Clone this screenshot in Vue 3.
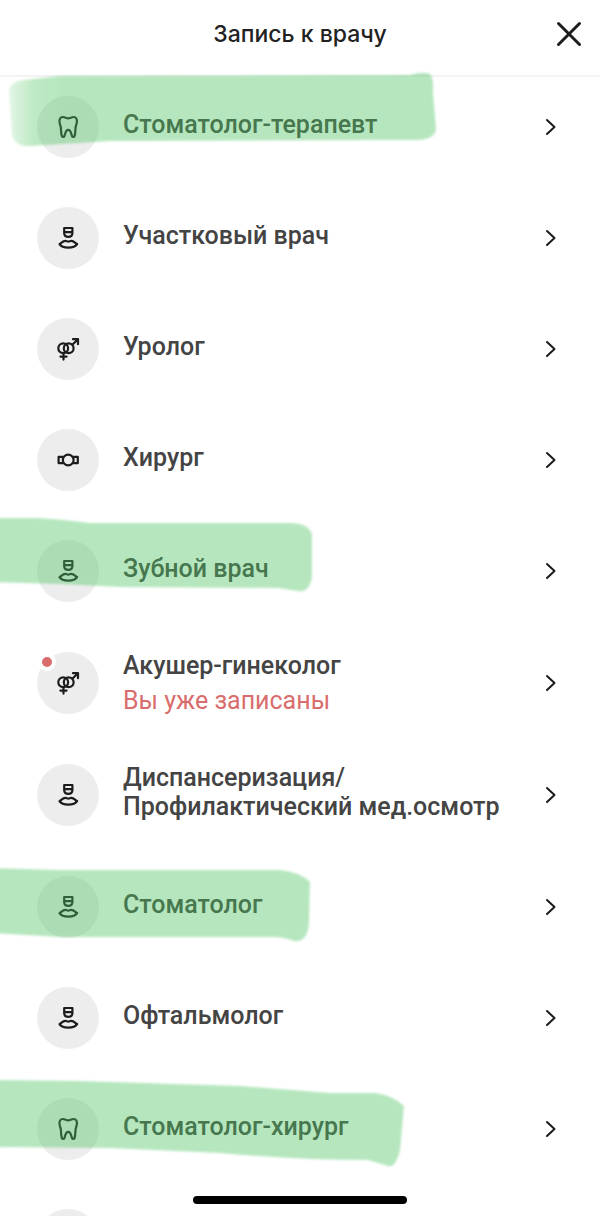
<script setup>
import { ref } from "vue";

const doctors = ref([
  {
    id: 1,
    title: "Стоматолог-терапевт",
    icon: "tooth",
    marker:
      "M9 18 Q11 9 24 8 L60 4 L410 3 Q424 -1 430 2 Q434 8 433 20 L436 58 Q434 67 418 68 L110 69 L30 74 Q14 75 12 62 Z",
    fade: true,
  },
  { id: 2, title: "Участковый врач", icon: "doctor" },
  { id: 3, title: "Уролог", icon: "gender" },
  { id: 4, title: "Хирург", icon: "surgeon" },
  {
    id: 5,
    title: "Зубной врач",
    icon: "doctor",
    marker:
      "M-8 2 L36 2 Q60 3 90 7 L290 7 Q308 7 312 18 L312 60 Q310 77 298 75 L278 72 L120 71 L60 68 L-8 66 Z",
  },
  {
    id: 6,
    title: "Акушер-гинеколог",
    icon: "gender",
    note: "Вы уже записаны",
  },
  {
    id: 7,
    title: "Диспансеризация/\nПрофилактический мед.осмотр",
    icon: "doctor",
  },
  {
    id: 8,
    title: "Стоматолог",
    icon: "doctor",
    marker:
      "M-8 16 L60 18 L280 18 Q300 20 310 30 L309 70 Q308 91 294 89 Q284 85 272 85 L60 85 L-8 81 Z",
  },
  {
    id: 9,
    title: "Офтальмолог",
    icon: "doctor",
  },
  {
    id: 10,
    title: "Стоматолог-хирург",
    icon: "tooth",
    marker:
      "M-8 6 L80 7 L240 12 L330 19 L375 19 Q392 21 404 32 L400 76 Q396 94 388 92 L368 86 Q300 86 220 79 L110 74 L-8 73 Z",
  },
  { id: 11, title: "", icon: "" },
]);
</script>

<template>
  <main class="screen">
    <header class="header">
      <h1>Запись к врачу</h1>
      <button class="close" type="button" aria-label="Закрыть">
        <svg width="26" height="26" viewBox="0 0 26 26">
          <path d="M2.5 2.5 23.5 23.5M23.5 2.5 2.5 23.5" />
        </svg>
      </button>
    </header>

    <ul class="list">
      <li v-for="doctor in doctors" :key="doctor.id">
        <button
          type="button"
          class="doctor"
          :class="{ noted: doctor.note, tall: doctor.id === 7 }"
        >
          <span class="avatar">
            <svg
              v-if="doctor.icon === 'tooth'"
              class="icon"
              width="24"
              height="24"
              viewBox="0 0 24 24"
            >
              <path
                d="M12.2 3.4C10.200 3.200 8.800 2 6.800 2 4.200 2 3.200 4.200 3.500 7c.2 2.200 1.200 3.600 1.400 6 .2 2.800.1 5.600.9 7.800.5 1.500 2.200 1.500 2.700 0 .8-2.300 1-5.900 3.700-5.900s2.900 3.600 3.700 5.900c.5 1.500 2.200 1.500 2.700 0 .8-2.200.7-5 .9-7.800.2-2.400 1.200-3.800 1.400-6 .3-2.800-.7-5-3.300-5-2 0-3.400 1.200-5.400 1.400Z"
              />
            </svg>
            <svg
              v-else-if="doctor.icon === 'doctor'"
              class="icon"
              width="24"
              height="24"
              viewBox="0 0 24 24"
            >
              <path
                d="M8.200 2h8.200v5c0 2.300-1.700 3.900-4.100 3.900S8.200 9.300 8.200 7ZM8.200 6.200h8.200"
              />
              <path
                d="M3.500 18.100C5.300 17.200 6.600 14.800 9.400 14.800c1.200 0 1.800.8 2.900.8s1.700-.8 2.900-.8c2.800 0 4.100 2.400 5.900 3.300-1.300 2.100-4.500 3.500-8.800 3.500s-7.500-1.400-8.800-3.500Z"
              />
            </svg>
            <svg
              v-else-if="doctor.icon === 'gender'"
              class="icon"
              width="24"
              height="24"
              viewBox="0 0 24 24"
            >
              <circle cx="7.200" cy="11.200" r="4.900" />
              <circle cx="12.700" cy="11.200" r="4.900" />
              <path
                d="M7.500 16v6.600M4.400 19.600h6.200M16.300 7.700 22 2.200M17 2.200h5v5"
              />
            </svg>
            <svg
              v-else-if="doctor.icon === 'surgeon'"
              class="icon"
              width="24"
              height="24"
              viewBox="0 0 24 24"
            >
              <circle cx="12.200" cy="12" r="5.400" />
              <path d="M7 8.900H2.600v6.200H7M17.400 8.900h4.400v6.200h-4.400" />
            </svg>
            <span v-if="doctor.note" class="badge"></span>
          </span>

          <span class="details">
            <span class="title">{{ doctor.title }}</span>
            <span v-if="doctor.note" class="note">{{ doctor.note }}</span>
          </span>

          <svg class="arrow" width="12" height="18" viewBox="0 0 12 18">
            <path d="M2 2 9.500 9 2 16" />
          </svg>

          <svg
            v-if="doctor.marker"
            class="marker"
            width="450"
            height="110"
            viewBox="0 0 450 110"
          >
            <defs>
              <linearGradient id="fade">
                <stop offset="0" stop-color="#4bc35f" stop-opacity="0.4" />
                <stop offset="0.06" stop-color="#4bc35f" stop-opacity="0.9" />
                <stop offset="0.12" stop-color="#4bc35f" />
              </linearGradient>
            </defs>
            <path
              :d="doctor.marker"
              :fill="doctor.fade ? 'url(#fade)' : '#4bc35f'"
            />
          </svg>
        </button>
      </li>
    </ul>

    <div class="home"></div>
  </main>
</template>

<style>
body {
  margin: 0;
  background-color: #fff;
}
</style>

<style scoped>
* {
  box-sizing: border-box;
}

.screen {
  position: relative;
  display: flex;
  flex-direction: column;
  height: 100vh;
  overflow: hidden;
  background-color: #fff;
  font-family: Roboto, sans-serif;
}

.header {
  display: grid;
  grid-template-columns: 1fr auto 1fr;
  align-items: center;
  flex: none;
  height: 77px;
  padding: 0 18px 8px;
  border-bottom: 2px solid #f3f3f3;
}

h1 {
  grid-column: 2;
  margin: 0;
  color: #222;
  font-family: Inter, sans-serif;
  font-size: 23px;
  font-weight: 500;
  line-height: 28px;
}

button {
  border: none;
  background: none;
  cursor: pointer;
}

.close {
  display: flex;
  justify-self: end;
  padding: 0;
}

svg {
  flex: none;
  overflow: visible;
  fill: none;
  stroke: #1c1c1e;
  stroke-linecap: round;
  stroke-linejoin: round;
}

.close svg {
  stroke-width: 3;
}

.list {
  display: flex;
  flex: 1;
  flex-direction: column;
  gap: 49px;
  margin: 0;
  padding: 19px 0 0;
  list-style: none;
}

.doctor {
  position: relative;
  display: flex;
  align-items: center;
  width: 100%;
  height: 62px;
  padding: 0 43px 0 37px;
  font-family: inherit;
  text-align: left;
}

.doctor.noted {
  height: 63px;
}

.doctor.tall {
  height: 64px;
}

.avatar {
  position: relative;
  display: flex;
  align-items: center;
  justify-content: center;
  flex: none;
  width: 62px;
  height: 62px;
  border-radius: 50%;
  background-color: #ededed;
}

.icon {
  stroke-width: 2.2;
}

.badge {
  position: absolute;
  top: 1px;
  left: 1px;
  width: 18px;
  height: 18px;
  border: 4px solid #fff;
  border-radius: 50%;
  background-color: #d96c6c;
}

.details {
  display: flex;
  flex: 1;
  flex-direction: column;
  gap: 6px;
  padding: 0 12px 6px 24px;
}

.title {
  color: #444;
  font-size: 25px;
  font-weight: 500;
  line-height: 29px;
  white-space: pre-line;
}

.note {
  color: #d96c6c;
  font-size: 25px;
  line-height: 29px;
}

.noted .details {
  padding-bottom: 0;
}

.arrow {
  stroke-width: 2;
}

.marker {
  position: absolute;
  top: -24px;
  left: 0;
  stroke: none;
  opacity: 0.4;
  filter: blur(1px);
  pointer-events: none;
}

.home {
  position: absolute;
  bottom: 12px;
  left: 50%;
  width: 214px;
  height: 8px;
  border-radius: 4px;
  background-color: #000;
  transform: translateX(-50%);
}
</style>
